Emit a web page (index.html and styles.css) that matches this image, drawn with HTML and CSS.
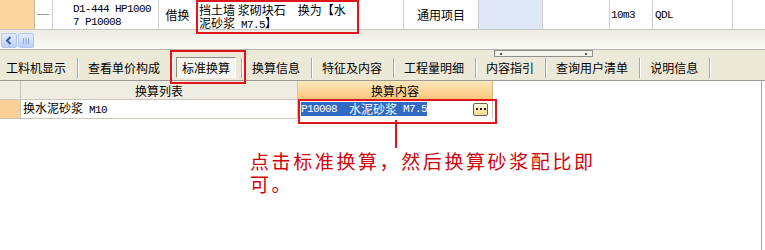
FILE: index.html
```html
<!DOCTYPE html>
<html lang="zh-CN">
<head>
<meta charset="utf-8">
<title>标准换算</title>
<link rel="stylesheet" href="styles.css">
</head>
<body>
<div class="toprow">
  <div class="c c1"></div>
  <div class="c c2"><span class="tline"></span></div>
  <div class="c c3 two"><span class="txt"><span class="ln a">D1-444 HP1000</span><span class="ln a">7 P10008</span></span></div>
  <div class="c c4 mid">借换</div>
  <div class="c c5 two mark"><span class="txt"><span class="ln">挡土墙 浆砌块石<span class="a">  </span>换为【水</span><span class="ln">泥砂浆<span class="a"> M7.5</span>】</span></span></div>
  <div class="c c6 mid">通用项目</div>
  <div class="c c7"></div>
  <div class="c c8"></div>
  <div class="c c9 lft"><span class="a">10m3</span></div>
  <div class="c c10 lft"><span class="a">QDL</span></div>
  <div class="c c11"></div>
</div>
<div class="hscroll">
  <div class="sbtn"><svg width="14" height="13" viewBox="0 0 14 13"><path d="M8.5 3 L5 6.5 L8.5 10" fill="none" stroke="#3a58b0" stroke-width="2"/></svg></div>
  <div class="sbtn thumb"><svg width="14" height="13" viewBox="0 0 14 13"><path d="M4.5 4v6M7 4v6M9.5 4v6" stroke="#8aa5e6" stroke-width="1"/></svg></div>
</div>
<div class="tabbar">
  <span class="grip"><i></i><i></i></span>
  <div class="tab first">工料机显示</div><span class="sep"></span>
  <div class="tab">查看单价构成</div><span class="sep"></span>
  <div class="tab sel"><span class="selbox">标准换算</span></div><span class="sep"></span>
  <div class="tab">换算信息</div><span class="sep"></span>
  <div class="tab">特征及内容</div><span class="sep"></span>
  <div class="tab">工程量明细</div><span class="sep"></span>
  <div class="tab">内容指引</div><span class="sep"></span>
  <div class="tab">查询用户清单</div><span class="sep"></span>
  <div class="tab">说明信息</div><span class="sep"></span>
</div>
<div class="grid">
  <div class="grow head">
    <div class="g g1"></div>
    <div class="g g2">换算列表</div>
    <div class="g g3">换算内容</div>
  </div>
  <div class="grow">
    <div class="g g1 org"></div>
    <div class="g g2 lt"><span class="txt">换水泥砂浆<span class="a"> M10</span></span></div>
    <div class="g g3 lt mark2"><span class="hilite"><span class="a">P10008  </span>水泥砂浆<span class="a"> M7.5</span></span><span class="dots"><i></i><i></i><i></i></span></div>
  </div>
  <div class="note">
    <div class="vline"></div>
    <p class="nline">点击标准换算，然后换算砂浆配比即</p>
    <p class="nline">可。</p>
  </div>
</div>
</body>
</html>
```
FILE: styles.css
```css
* { box-sizing: border-box; margin: 0; padding: 0; }
html, body { width: 765px; height: 250px; overflow: hidden; background: #fff; }
body { font: 12px/12px "Noto Sans CJK SC", "Liberation Sans", sans-serif; color: #000; }
.a { font-family: "Liberation Mono", "Noto Sans CJK SC", monospace; font-size: 11px; letter-spacing: -0.6px; white-space: pre; }
.txt { display: block; white-space: nowrap; }
.ln { display: block; height: 13px; line-height: 13px; white-space: pre; }

/* top data row */
.toprow { display: flex; height: 30px; border-bottom: 1px solid #c6c6c6; background: #fff; }
.c { flex: none; border-right: 1px solid #cdcdcd; display: flex; align-items: center; white-space: nowrap; }
.c1 { width: 35px; background: #fbd59e; border-right-color: #c9b79a; }
.c2 { width: 18px; }
.tline { display: block; width: 12px; height: 1px; background: #9a9a9a; margin-left: 2px; }
.c3 { width: 106px; padding-left: 20px; }
.c4 { width: 38px; }
.c5 { width: 207px; padding-left: 2px; position: relative; }
.c6 { width: 75px; }
.c7 { width: 64px; background: #dde7f5; }
.c8 { width: 67px; }
.c9 { width: 43px; padding-left: 1px; }
.c10 { width: 80px; padding-left: 2px; }
.c11 { flex: 1; border-right: 0; }
.two { align-items: flex-start; padding-top: 3px; }
.mid { justify-content: center; }
.mark::after { content: ""; position: absolute; left: -1px; top: 0; width: 159px; height: 30px; border: 2px solid #e0141b; }

/* horizontal scroll strip */
.hscroll { height: 20px; display: flex; gap: 1px; padding: 3px 0 0 1px; background: linear-gradient(#ecebe4, #fbfbf8); border-bottom: 1px solid #b8b6ab; }
.sbtn { width: 16px; height: 15px; border: 1px solid #b2c6f2; border-radius: 2px; background: linear-gradient(#e6eeff, #bccff8); display: flex; align-items: center; justify-content: center; }

/* tabs */
.tabbar { position: relative; height: 31px; display: flex; align-items: flex-start; padding-top: 7px; background: #ece9d8; border-bottom: 1px solid #9c9a90; }
.tab { height: 21px; line-height: 22px; padding: 0 11px 0 10px; white-space: nowrap; }
.tab.first { padding-left: 6px; }
.sep { width: 1px; height: 20px; margin-top: 1px; background: #aca899; box-shadow: 1px 0 0 #fff; flex: none; }
.tab.sel { position: relative; padding: 0 5px 0 4px; }
.selbox { display: block; height: 21px; padding: 0 5px 0 5px; border: 1px solid; border-color: #8e8c80 #fdfdfb #fdfdfb #8e8c80; background: #f6f5ef; line-height: 20px; }
.tab.sel::after { content: ""; position: absolute; left: -2px; top: -7px; width: 72px; height: 30px; border: 2px solid #e0141b; }
.grip { position: absolute; left: 494px; top: 0; width: 99px; height: 7px; border: 1px solid #8f8f8a; background: #f4f4ef; display: flex; justify-content: space-between; align-items: center; padding: 0 5px; }
.grip i { width: 2px; height: 2px; background: #555; }

/* grid */
.grid { height: 169px; border-right: 1px solid #a5a5a5; width: 762px; }
.grow { display: flex; height: 19px; }
.g { flex: none; height: 19px; border-right: 1px solid #c7c5b8; border-bottom: 1px solid #c9c7bb; display: flex; align-items: center; white-space: nowrap; }
.g1 { width: 21px; }
.g2 { width: 277px; }
.g3 { width: 195px; }
.head .g { justify-content: center; background: #efede1; line-height: 19px; }
.head .g3 { background: linear-gradient(#fde8bd, #f7c57c); border-right-color: #d9b27a; border-bottom-color: #d6a864; }
.org { background: #f9d196; }
.lt { padding-left: 2px; }
.mark2 { position: relative; padding-left: 3px; border-bottom-color: #fff; }
.mark2::after { content: ""; position: absolute; left: 0; top: -1px; width: 195px; height: 21px; border: 2px solid #e0141b; }
.hilite { background: #316ac5; color: #fff; height: 14px; line-height: 14px; display: flex; align-items: center; white-space: nowrap; }
.dots { margin-left: auto; margin-right: 4px; width: 15px; height: 13px; border: 1px solid #6f6143; border-radius: 2px; background: linear-gradient(#fffbe6, #f3d98f); display: flex; justify-content: center; align-items: center; gap: 2px; }
.dots i { width: 2px; height: 2px; background: #222; }

/* annotation */
.note { padding-left: 250px; }
.vline { width: 2px; height: 28px; margin: 1px 0 0 145px; background: #e0141b; }
.nline { height: 23px; font-size: 19px; line-height: 23px; letter-spacing: 2.6px; color: #d3000c; white-space: nowrap; }
.nline:first-of-type { margin-top: 1px; }
```
